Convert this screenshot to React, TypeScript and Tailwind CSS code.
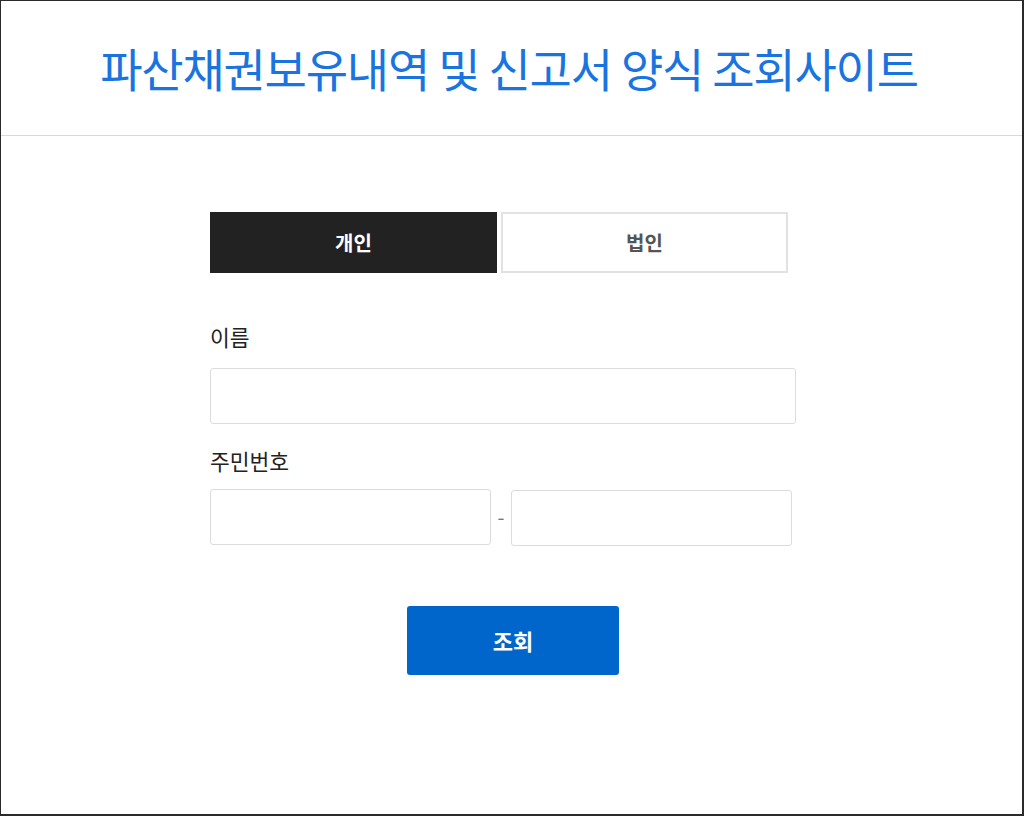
import React from "react";

export default function App() {
  const font = { fontFamily: '"Noto Sans CJK KR", "Noto Sans", sans-serif' };
  return (
    <div
      className="w-[1024px] h-[816px] box-border border-t border-l border-r-2 border-b-2 border-[#2a2a2a] bg-white flex flex-col"
      style={font}
    >
      <header className="h-[135px] shrink-0 border-b border-[#d9d9d9] flex items-center justify-center">
        <h1 className="text-[46px] leading-none tracking-[-1.2px] text-[#1a74e0] font-normal pb-[2px] pr-[5px]">
          파산채권보유내역 및 신고서 양식 조회사이트
        </h1>
      </header>
      <main className="ml-[209px] w-[586px] pt-[76px] flex flex-col">
        <div className="flex gap-[4px]">
          <button className="w-[287px] h-[61px] bg-[#222222] text-white text-[20px] font-bold flex items-center justify-center">
            개인
          </button>
          <button className="w-[287px] h-[61px] bg-white border-2 border-[#e2e2e2] text-[#555555] text-[20px] font-bold flex items-center justify-center">
            법인
          </button>
        </div>
        <label className="mt-[50px] text-[21.5px] leading-[28px] text-[#222222]">이름</label>
        <input className="mt-[17px] w-[586px] h-[56px] border border-[#dcdcdc] rounded-[3px] bg-white outline-none" />
        <label className="mt-[23px] text-[21.5px] leading-[28px] text-[#222222]">주민번호</label>
        <div className="mt-[14px] flex items-start">
          <input className="w-[281px] h-[56px] border border-[#dcdcdc] rounded-[3px] bg-white outline-none" />
          <span className="w-[20px] h-[56px] flex items-center justify-center text-[#777777] text-[20px]">-</span>
          <input className="w-[281px] h-[56px] mt-[1px] border border-[#dcdcdc] rounded-[3px] bg-white outline-none" />
        </div>
        <button className="mt-[60px] ml-[197px] w-[212px] h-[69px] rounded-[3px] bg-[#0066cc] text-white text-[22px] font-bold flex items-center justify-center">
          조회
        </button>
      </main>
    </div>
  );
}
